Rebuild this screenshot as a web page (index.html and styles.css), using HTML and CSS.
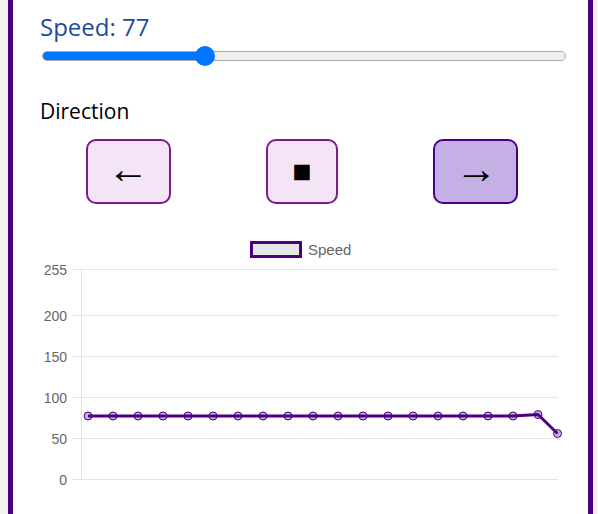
FILE: index.html
```html
<!DOCTYPE html>
<html lang="en">
<head>
    <meta charset="UTF-8">
    <meta name="viewport" content="width=device-width, initial-scale=1.0">
    <title>Motor control</title>
    <link rel="stylesheet" href="styles.css">
</head>
<body>
    <div class="panel">
        <div class="speed-label">Speed: <span id="speedValue">77</span></div>
        <input class="slider" type="range" min="0" max="255" value="77" style="--fill: 31%">

        <h3 class="title">Direction</h3>
        <div class="buttons">
            <button class="dir arrow">&larr;</button>
            <button class="dir stop">&#9632;</button>
            <button class="dir arrow on">&rarr;</button>
        </div>

        <svg class="chart" width="526" height="282" viewBox="0 0 526 282">
            <!-- legend -->
            <rect x="211.5" y="10.5" width="49" height="14" fill="#e6e6e6" stroke="#4b0082" stroke-width="3"/>
            <text class="legend" x="268" y="23">Speed</text>

            <!-- grid -->
            <g stroke="#e4e4e4" stroke-width="1">
                <line x1="32" y1="37.5" x2="518" y2="37.5"/>
                <line x1="32" y1="83.5" x2="518" y2="83.5"/>
                <line x1="32" y1="124.5" x2="518" y2="124.5"/>
                <line x1="32" y1="165.5" x2="518" y2="165.5"/>
                <line x1="32" y1="206.5" x2="518" y2="206.5"/>
                <line x1="32" y1="247.5" x2="518" y2="247.5"/>
                <line x1="41.5" y1="37.5" x2="41.5" y2="247.5"/>
            </g>
            <g class="ticks">
                <text x="27" y="42.5">255</text>
                <text x="27" y="88.5">200</text>
                <text x="27" y="129.5">150</text>
                <text x="27" y="170.5">100</text>
                <text x="27" y="211.5">50</text>
                <text x="27" y="252.5">0</text>
            </g>

            <!-- data -->
            <polyline fill="none" stroke="#4b0082" stroke-width="3" stroke-linejoin="round"
                points="48,184 473,184 498,182.5 517.5,201.5"/>
            <g fill="rgba(75,0,130,0.3)" stroke="#4b0082" stroke-width="1">
                <circle cx="48" cy="184" r="4"/>
                <circle cx="73" cy="184" r="4"/>
                <circle cx="98" cy="184" r="4"/>
                <circle cx="123" cy="184" r="4"/>
                <circle cx="148" cy="184" r="4"/>
                <circle cx="173" cy="184" r="4"/>
                <circle cx="198" cy="184" r="4"/>
                <circle cx="223" cy="184" r="4"/>
                <circle cx="248" cy="184" r="4"/>
                <circle cx="273" cy="184" r="4"/>
                <circle cx="298" cy="184" r="4"/>
                <circle cx="323" cy="184" r="4"/>
                <circle cx="348" cy="184" r="4"/>
                <circle cx="373" cy="184" r="4"/>
                <circle cx="398" cy="184" r="4"/>
                <circle cx="423" cy="184" r="4"/>
                <circle cx="448" cy="184" r="4"/>
                <circle cx="473" cy="184" r="4"/>
                <circle cx="498" cy="182.5" r="4"/>
                <circle cx="517.5" cy="201.5" r="4"/>
            </g>
        </svg>
    </div>
</body>
</html>
```

FILE: styles.css
```css
*{
    box-sizing: border-box;
}
body{
    margin: 0;
    background: #f4f2ee;
    font-family: "Open Sans", "Noto Sans", sans-serif;
}
.panel{
    margin: 0 5px 0 8px;
    min-height: 100vh;
    padding: 11px 22px 0 27px;
    background: #fff;
    border: 5px solid #4b0082;
    border-top: none;
}
.speed-label{
    font-size: 24px;
    line-height: 32px;
    color: #1c4b9b;
}
.slider{
    -webkit-appearance: none;
    appearance: none;
    display: block;
    width: calc(100% - 2px);
    height: 20px;
    margin: 3px 0 0 2px;
    background: transparent;
}
.slider::-webkit-slider-runnable-track{
    height: 10px;
    border: 1px solid #a9a9a9;
    border-radius: 5px;
    background: linear-gradient(to right, #0075ff var(--fill), #efefef var(--fill));
}
.slider::-webkit-slider-thumb{
    -webkit-appearance: none;
    width: 20px;
    height: 20px;
    margin-top: -6px;
    border-radius: 50%;
    background: #0075ff;
    border: none;
}
.title{
    margin: 31px 0 0;
    font-size: 21px;
    font-weight: normal;
    line-height: 28px;
    color: #000;
}
.buttons{
    display: flex;
    justify-content: space-around;
    margin: 14px 0 0 -2px;
}
.dir{
    height: 65px;
    padding: 0 24.5px;
    font-family: "Liberation Serif", "DejaVu Serif", serif;
    font-size: 32px;
    line-height: 37px;
    color: #000;
    background: #f3e5f5;
    border: 2px solid #7b1a88;
    border-radius: 10px;
}
.dir.arrow{
    padding: 0 19.5px 4px;
    font-size: 42px;
}
.dir.on{
    background: #c5b0e6;
    border-color: #4b0082;
}
.chart{
    display: block;
    margin-top: 28px;
    font-family: "Liberation Sans", Arial, sans-serif;
}
.legend{
    font-size: 15px;
    fill: #666;
}
.ticks text{
    font-size: 14px;
    fill: #666;
    text-anchor: end;
}
```
